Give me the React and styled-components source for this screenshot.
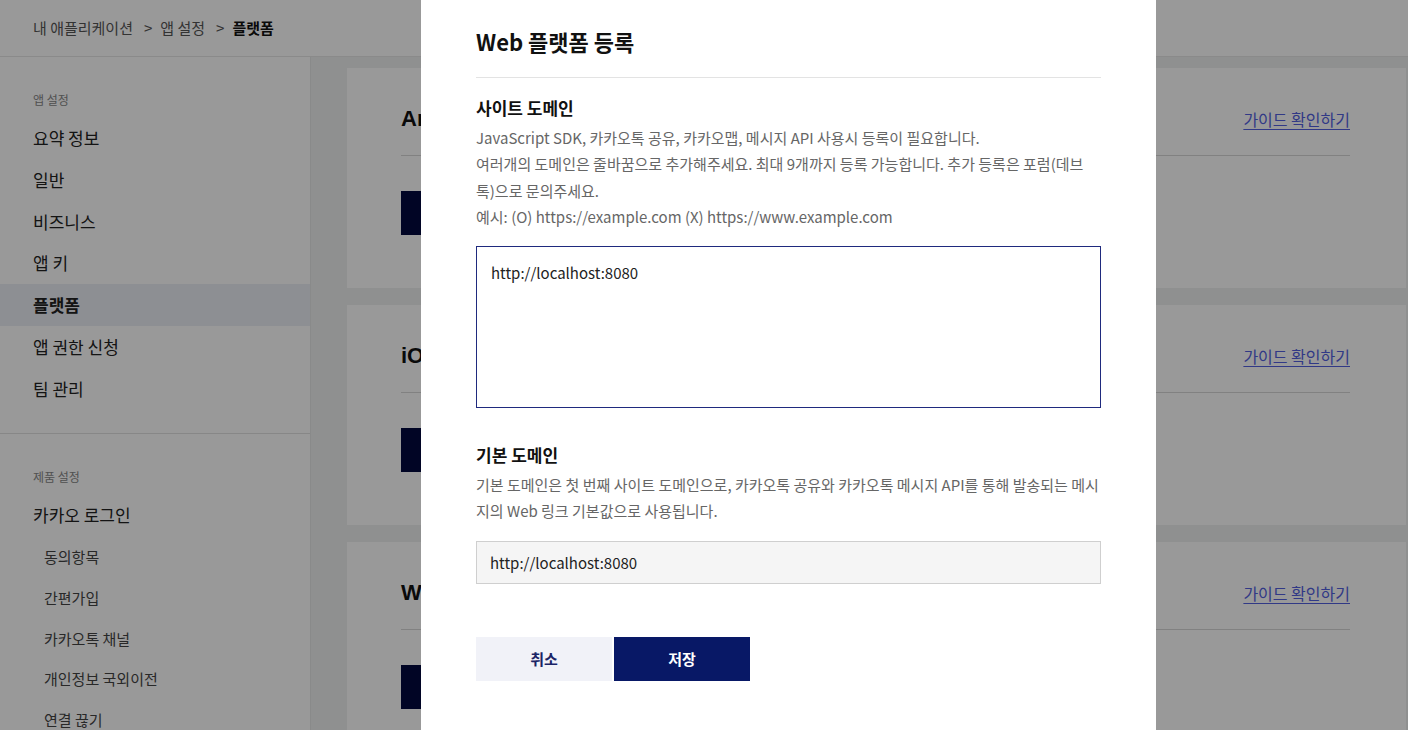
import React from 'react';
import styled, { createGlobalStyle } from 'styled-components';

const GlobalStyle = createGlobalStyle`
    html, body {
        margin: 0;
        padding: 0;
        height: 100%;
        overflow: hidden;
    }
    body {
        font-family: "Noto Sans CJK KR", "Noto Sans", sans-serif;
        color: #222;
        background: #fff;
    }
    * {
        box-sizing: border-box;
    }
`;

const menu = ['요약 정보', '일반', '비즈니스', '앱 키', '플랫폼', '앱 권한 신청', '팀 관리'];
const subMenu = ['동의항목', '간편가입', '카카오톡 채널', '개인정보 국외이전', '연결 끊기'];
const platforms = ['Android', 'iOS', 'Web'];

const App = () => {
    return (
        <>
            <GlobalStyle />
            <Page>
                <Header>
                    <Crumb>내 애플리케이션</Crumb>
                    <Sep>&gt;</Sep>
                    <Crumb>앱 설정</Crumb>
                    <Sep>&gt;</Sep>
                    <Crumb current>플랫폼</Crumb>
                </Header>
                <Body>
                    <Sidebar>
                        <Section>
                            <SectionLabel>앱 설정</SectionLabel>
                            {menu.map((m) => (
                                <MenuItem key={m} active={m === '플랫폼'}>
                                    {m}
                                </MenuItem>
                            ))}
                        </Section>
                        <Section last>
                            <SectionLabel>제품 설정</SectionLabel>
                            <MenuItem>카카오 로그인</MenuItem>
                            <SubList>
                                {subMenu.map((m) => (
                                    <SubItem key={m}>{m}</SubItem>
                                ))}
                            </SubList>
                        </Section>
                    </Sidebar>
                    <Main>
                        {platforms.map((p) => (
                            <Card key={p}>
                                <CardHead>
                                    <CardTitle>{p}</CardTitle>
                                    <GuideLink>가이드 확인하기</GuideLink>
                                </CardHead>
                                <RegisterBtn>{p} 플랫폼 등록</RegisterBtn>
                            </Card>
                        ))}
                    </Main>
                </Body>
            </Page>
            <Dim />
            <Modal>
                <ModalTitle>Web 플랫폼 등록</ModalTitle>
                <Field>
                    <FieldTitle>사이트 도메인</FieldTitle>
                    <Desc>
                        JavaScript SDK, 카카오톡 공유, 카카오맵, 메시지 API 사용시 등록이 필요합니다.
                        <br />
                        여러개의 도메인은 줄바꿈으로 추가해주세요. 최대 9개까지 등록 가능합니다. 추가 등록은 포럼(데브톡)으로 문의주세요.
                        <br />
                        예시: (O) https://example.com (X) https://www.example.com
                    </Desc>
                    <TextArea defaultValue="http://localhost:8080" />
                </Field>
                <Field second>
                    <FieldTitle>기본 도메인</FieldTitle>
                    <Desc>
                        기본 도메인은 첫 번째 사이트 도메인으로, 카카오톡 공유와 카카오톡 메시지 API를 통해 발송되는 메시지의 Web 링크 기본값으로 사용됩니다.
                    </Desc>
                    <ReadInput readOnly value="http://localhost:8080" />
                </Field>
                <Actions>
                    <ActionBtn>취소</ActionBtn>
                    <ActionBtn primary>저장</ActionBtn>
                </Actions>
            </Modal>
        </>
    );
};

const Page = styled.div`
    width: 1408px;
    height: 730px;
    display: flex;
    flex-direction: column;
`;

const Header = styled.div`
    height: 57px;
    flex-shrink: 0;
    display: flex;
    align-items: center;
    padding: 0 33px 1px;
    border-bottom: 1px solid #e6e6e6;
    font-size: 15px;
`;

const Crumb = styled.span`
    color: ${(p) => (p.current ? '#111' : '#555')};
    font-weight: ${(p) => (p.current ? 700 : 400)};
`;

const Sep = styled.span`
    color: #555;
    margin: 0 8px 0 11px;
`;

const Body = styled.div`
    flex: 1;
    display: flex;
    min-height: 0;
`;

const Sidebar = styled.nav`
    width: 311px;
    flex-shrink: 0;
    border-right: 1px solid #e4e6e6;
    background: #fff;
`;

const Section = styled.div`
    padding: 34px 0 ${(p) => (p.last ? '0' : '23px')};
    border-bottom: ${(p) => (p.last ? 'none' : '1px solid #e2e2e2')};
`;

const SectionLabel = styled.div`
    padding-left: 33px;
    font-size: 12px;
    line-height: 18px;
    color: #888;
    margin-bottom: 8px;
`;

const MenuItem = styled.div`
    height: 41.8px;
    line-height: 41.8px;
    padding-left: 33px;
    font-size: 17px;
    color: #222;
    font-weight: ${(p) => (p.active ? 700 : 400)};
    background: ${(p) => (p.active ? '#eceef6' : 'transparent')};
`;

const SubList = styled.div`
    padding-top: 2px;
`;

const SubItem = styled.div`
    height: 40.6px;
    line-height: 40.6px;
    padding-left: 44px;
    font-size: 15px;
    color: #444;
`;

const Main = styled.main`
    flex: 1;
    background: #eff1f0;
    padding: 11px 2px 0 36px;
    display: flex;
    flex-direction: column;
    gap: 17px;
    overflow: hidden;
`;

const Card = styled.section`
    background: #fff;
    padding: 34px 56px 53px 54px;
    flex-shrink: 0;
`;

const CardHead = styled.div`
    display: flex;
    align-items: flex-start;
    justify-content: space-between;
    height: 54px;
    border-bottom: 1px solid #d8d8d8;
    margin-bottom: 35px;
`;

const CardTitle = styled.h2`
    margin: 0;
    font-family: "Liberation Sans", Arial, sans-serif;
    font-size: 22px;
    line-height: 34px;
    font-weight: 700;
    color: #111;
`;

const GuideLink = styled.a`
    font-size: 16px;
    line-height: 34px;
    color: #5260e0;
    text-decoration: underline;
    text-underline-offset: 3px;
`;

const RegisterBtn = styled.button`
    height: 44px;
    padding: 0 28px;
    border: none;
    background: #03093f;
    color: #fff;
    font-family: inherit;
    font-size: 15px;
    font-weight: 700;
`;

const Dim = styled.div`
    position: fixed;
    inset: 0;
    background: rgba(0, 0, 0, 0.4);
`;

const Modal = styled.div`
    position: fixed;
    top: 0;
    left: 421px;
    width: 735px;
    bottom: 0;
    background: #fff;
    padding: 23px 55px 0;
`;

const ModalTitle = styled.h1`
    margin: 0;
    font-size: 22px;
    line-height: 36px;
    font-weight: 700;
    color: #111;
    padding-bottom: 18px;
    border-bottom: 1px solid #e3e3e3;
`;

const Field = styled.div`
    margin-top: ${(p) => (p.second ? '34px' : '17px')};
`;

const FieldTitle = styled.h3`
    margin: 0 0 4px;
    font-size: 17px;
    line-height: 26px;
    font-weight: 700;
    color: #111;
`;

const Desc = styled.p`
    margin: 0 0 16px;
    font-size: 15px;
    line-height: 26.3px;
    color: #666;
`;

const TextArea = styled.textarea`
    display: block;
    width: 100%;
    height: 162px;
    resize: none;
    border: 1px solid #1f2a7e;
    padding: 13px 14px;
    font-family: inherit;
    font-size: 15px;
    line-height: 26px;
    color: #222;
    outline: none;
`;

const ReadInput = styled.input`
    display: block;
    width: 100%;
    height: 43px;
    border: 1px solid #cfcfcf;
    background: #f5f5f5;
    padding: 0 13px;
    font-family: inherit;
    font-size: 15px;
    color: #222;
    outline: none;
`;

const Actions = styled.div`
    display: flex;
    gap: 2px;
    margin-top: 53px;
`;

const ActionBtn = styled.button`
    width: 136px;
    height: 44px;
    border: none;
    background: ${(p) => (p.primary ? '#081866' : '#f1f2f8')};
    color: ${(p) => (p.primary ? '#fff' : '#1b2466')};
    font-family: inherit;
    font-size: 15px;
    font-weight: 700;
    cursor: pointer;
`;

export default App;
